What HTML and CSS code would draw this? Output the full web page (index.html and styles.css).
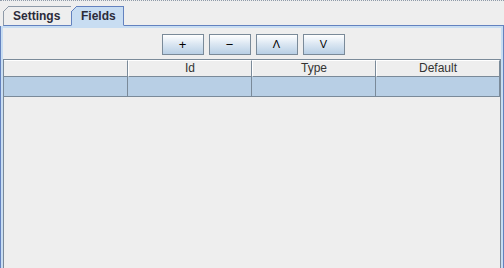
FILE: index.html
```html
<!DOCTYPE html>
<html lang="en">
<head>
    <meta charset="UTF-8">
    <title>Fields</title>
    <link rel="stylesheet" href="styles.css">
</head>
<body>
    <div class="window">
        <div class="tabs">
            <div class="tab">Settings</div>
            <div class="tab selected">Fields</div>
            <div class="tab-rest"></div>
        </div>
        <div class="panel">
            <div class="toolbar">
                <button class="btn">+</button>
                <button class="btn">&minus;</button>
                <button class="btn small">&Lambda;</button>
                <button class="btn small">V</button>
            </div>
            <div class="scroll">
                <div class="grid header">
                    <div class="cell"></div>
                    <div class="cell">Id</div>
                    <div class="cell">Type</div>
                    <div class="cell">Default</div>
                </div>
                <div class="grid row">
                    <div class="cell"></div>
                    <div class="cell"></div>
                    <div class="cell"></div>
                    <div class="cell"></div>
                </div>
            </div>
        </div>
    </div>
</body>
</html>
```

FILE: styles.css
```css
body {
    margin: 0;
    padding: 0;
    background-color: #eeeeee;
    font-family: "Liberation Sans", Arial, sans-serif;
    color: #333333;
}

.window {
    width: 504px;
    height: 268px;
    display: flex;
    flex-direction: column;
    overflow: hidden;
    border-top: 1px dotted #8e9aa8;
    box-sizing: border-box;
}

/* tab strip */
.tabs {
    display: flex;
    align-items: flex-end;
    height: 25px;
    padding-left: 3px;
}

.tab {
    position: relative;
    box-sizing: border-box;
    width: 69px;
    height: 20px;
    line-height: 18px;
    padding-left: 9px;
    font-size: 12px;
    font-weight: bold;
    color: #2b2b3a;
    border: 1px solid #8e9aa8;
    border-bottom: 1px solid #6382bf;
    background: #eeeeee;
}

/* bevelled top-left corner */
.tab::before {
    content: '';
    position: absolute;
    top: -1px;
    left: -1px;
    width: 6px;
    height: 6px;
    background: linear-gradient(135deg, #eeeeee 0 calc(50% - 0.7px), #8e9aa8 calc(50% - 0.7px) calc(50% + 0.7px), transparent calc(50% + 0.7px));
}

.tab.selected {
    width: 53px;
    margin-left: -1px;
    padding-left: 9px;
    background: #c8ddf2;
    border-color: #6382bf;
    border-bottom-color: #c8ddf2;
}

.tab.selected::before {
    background: linear-gradient(135deg, #eeeeee 0 calc(50% - 0.7px), #6382bf calc(50% - 0.7px) calc(50% + 0.7px), transparent calc(50% + 0.7px));
}

.tab-rest {
    flex: 1;
    border-bottom: 1px solid #6382bf;
}

/* content */
.panel {
    flex: 1;
    display: flex;
    flex-direction: column;
    border-left: 1px solid #6382bf;
    border-right: 1px solid #6382bf;
    box-shadow: inset 2px 0 0 #c8ddf2, inset -2px 0 0 #c8ddf2, inset 0 2px 0 #c8ddf2;
    padding: 2px 2px 0 2px;
}

.toolbar {
    display: flex;
    justify-content: center;
    gap: 5px;
    padding: 6px 0 4px 2px;
}

.btn {
    width: 42px;
    height: 21px;
    padding: 0;
    border: 1px solid #7a8a99;
    background: linear-gradient(#ffffff, #dde8f3 45%, #b8cfe5);
    font-family: "Liberation Sans", Arial, sans-serif;
    font-size: 13px;
    color: #000000;
    line-height: 17px;
}

.btn.small {
    font-size: 11px;
}

.scroll {
    flex: 1;
    border-left: 1px solid #7a8a99;
    border-right: 1px solid #7a8a99;
    border-top: 1px solid #7a8a99;
    background: #eeeeee;
}

.grid {
    display: grid;
    grid-template-columns: 124px 124px 124px 124px;
}

.header .cell {
    height: 15px;
    line-height: 15px;
    font-size: 12px;
    text-align: center;
    color: #333333;
    border-top: 1px solid #ffffff;
    border-left: 1px solid #ffffff;
    border-right: 1px solid #7a8a99;
    border-bottom: 1px solid #7a8a99;
}

.header .cell:first-child {
    border-left: none;
}

.row .cell {
    height: 19px;
    background: #b8cfe5;
    border-right: 1px solid #7a8a99;
    border-bottom: 1px solid #7a8a99;
}
```
